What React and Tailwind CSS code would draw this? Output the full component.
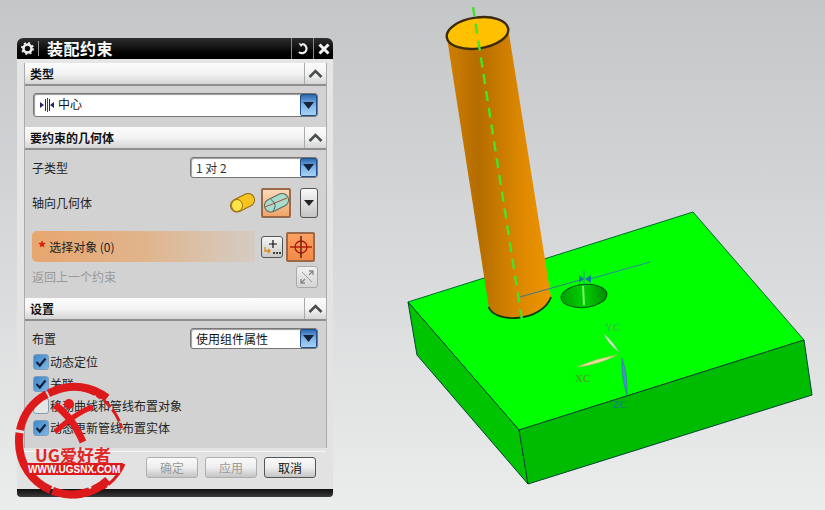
const font = { fontFamily: '"Noto Sans CJK SC","Liberation Sans",sans-serif' };

function Chevron() {
  return (
    <svg width="15" height="9" viewBox="0 0 15 9"><path d="M1.5 8 L7.5 2 L13.5 8" fill="none" stroke="#4a4d50" strokeWidth="2.6" /></svg>
  );
}

function Header({ title }) {
  return (
    <div className="flex h-[23px] border-b-2 border-[#8f8f8f] bg-gradient-to-b from-[#fbfbfb] via-[#f4f4f4] to-[#d4d5d6]">
      <div className="flex-1 pl-[5px] text-[12px] leading-[21px] font-bold text-[#111]">{title}</div>
      <div className="flex w-[22px] items-center justify-center border-l border-[#aaa]"><Chevron /></div>
    </div>
  );
}

function DropBtn() {
  return (
    <div className="flex w-[17px] items-center justify-center self-stretch rounded-[2px] border border-[#1f4e86] bg-gradient-to-b from-[#2f6bb2] via-[#7fb2e5] to-[#a9d2f2]">
      <svg width="11" height="7" viewBox="0 0 11 7"><path d="M0 0H11L5.5 7Z" fill="#14233a" /></svg>
    </div>
  );
}

function Combo({ className, children }) {
  return (
    <div className={"flex items-center rounded-[3px] border border-[#777] bg-white text-[12px] leading-[18px] text-[#111] shadow-[inset_1px_1px_1px_#999] " + className}>
      <div className="flex min-w-0 flex-1 items-center pl-[5px]">{children}</div>
      <DropBtn />
    </div>
  );
}

function Check({ label, checked = true }) {
  return (
    <div className="flex h-[22px] items-center gap-[1px] pl-[8px] text-[12px] text-[#222]">
      <div className={"flex h-[16px] w-[16px] items-center justify-center rounded-[3px] border border-[#7f9db9] " + (checked ? "bg-gradient-to-br from-[#3b86c8] to-[#7fb7e4]" : "bg-[#e6e6e6]")}>
        {checked && (
          <svg width="12" height="12" viewBox="0 0 12 12"><path d="M1.5 6 L4.8 9.5 L10.5 2.5" fill="none" stroke="#10223e" strokeWidth="2.2" /></svg>
        )}
      </div>
      <span>{label}</span>
    </div>
  );
}

function FootBtn({ children, disabled }) {
  return (
    <div className={"flex h-[21px] w-[52px] items-center justify-center rounded-[3px] border bg-gradient-to-b from-[#fafafa] via-[#eeeeee] to-[#c4c4c4] text-[12px] " + (disabled ? "border-[#aeaeae] text-[#9a9a9a]" : "border-[#555] text-[#111]")}>
      {children}
    </div>
  );
}

function Scene() {
  return (
    <svg className="absolute inset-0" width="825" height="510" viewBox="0 0 825 510">
      <defs>
        <linearGradient id="cyl" x1="0" y1="0" x2="1" y2="0">
          <stop offset="0" stopColor="#cf7f00" />
          <stop offset="0.3" stopColor="#b56d00" />
          <stop offset="0.75" stopColor="#e08a00" />
          <stop offset="1" stopColor="#ee9500" />
        </linearGradient>
        <linearGradient id="holeG" x1="0" y1="0" x2="1" y2="0">
          <stop offset="0" stopColor="#00a000" />
          <stop offset="0.5" stopColor="#00d000" />
          <stop offset="1" stopColor="#008a00" />
        </linearGradient>
      </defs>
      <polygon points="408,302 693,212 804,340 519,430" fill="#00ff00" stroke="#063" strokeWidth="1" />
      <polygon points="408,302 519,430 528,484 417,355" fill="#00c400" stroke="#043" strokeWidth="1" />
      <polygon points="519,430 804,340 812,395 528,484" fill="#00bc00" stroke="#043" strokeWidth="1" />
      <ellipse cx="584" cy="296" rx="23" ry="11.5" transform="rotate(-5 584 296)" fill="url(#holeG)" stroke="#065006" strokeWidth="1" />
      <path d="M447 38 L489 308 C495 324 542 322 551 297 L509 34 Z" fill="url(#cyl)" />
      <path d="M488.5 307 C495 324 542 322 551 297" fill="none" stroke="#0c3a14" strokeWidth="1.8" />
      <ellipse cx="477.5" cy="33" rx="31" ry="15.5" transform="rotate(-8 477.5 33)" fill="#ffc000" stroke="#3b2a10" strokeWidth="2.4" />
      <line x1="473" y1="7" x2="522" y2="320" stroke="#45e32c" strokeWidth="2.4" strokeDasharray="10 7" />
      <line x1="583" y1="286" x2="584" y2="305" stroke="#7cf06a" strokeWidth="2" />
      <line x1="520" y1="297" x2="580" y2="280" stroke="#3a7a8a" strokeWidth="1" />
      <line x1="590" y1="279" x2="650" y2="262" stroke="#2a8a9a" strokeWidth="1" />
      <line x1="584" y1="271" x2="584" y2="286" stroke="#2a8a9a" strokeWidth="1" />
      <polygon points="579,275 584,279 579,283" fill="#0f7a9a" />
      <polygon points="591,275 585,279 591,283" fill="#0f7a9a" />
      <path d="M604 334 Q612 340 619 352 Q608 344 604 334Z" fill="#c8e8c0" stroke="#7cb88a" strokeWidth="0.5" />
      <path d="M577 367 Q598 358 617 355 Q598 365 577 367Z" fill="#efdca0" stroke="#b8b070" strokeWidth="0.5" />
      <path d="M622 358 Q628 375 627 395 Q621 378 622 358Z" fill="#4a8fd0" stroke="#2a6a9a" strokeWidth="0.5" />
      <text x="605" y="331" fontSize="11" fill="#3fb44a" fontFamily="Liberation Serif, serif">YC</text>
      <text x="575" y="382" fontSize="11" fill="#4f9a2a" fontFamily="Liberation Serif, serif">XC</text>
      <text x="613" y="408" fontSize="11" fill="#1a7a8a" fontFamily="Liberation Serif, serif">ZC</text>
    </svg>
  );
}

function Stamp() {
  return (
    <div className="pointer-events-none absolute left-[10px] top-[380px] h-[124px] w-[122px]">
      <svg className="absolute inset-0" width="122" height="124" viewBox="0 0 122 124">
        <path d="M97 18 A52 52 0 0 0 44 11 A52 52 0 0 0 9 62 A52 52 0 0 0 46 112 A52 52 0 0 0 98 100" fill="none" stroke="#dc1a1c" strokeWidth="8" strokeDasharray="62 2 46 3 70 2 38 3" />
        <path d="M60 8 A54 54 0 0 1 112 50 M114 84 A54 54 0 0 1 90 110" fill="none" stroke="#dc1a1c" strokeWidth="3" strokeDasharray="9 3 14 2 5 4" />
        <path d="M44 111 Q68 122 92 106" fill="none" stroke="#dc1a1c" strokeWidth="6" strokeDasharray="18 2 9 2" />
        <circle cx="59" cy="24" r="5" fill="#e21a1c" />
        <path d="M45 25 C58 34 67 48 73 62" fill="none" stroke="#e21a1c" strokeWidth="7" />
        <path d="M83 27 C70 31 57 41 45 52" fill="none" stroke="#e21a1c" strokeWidth="5" />
        <path d="M16 83 H113 L110 95 L18 95Z" fill="#dc1a1c" />
      </svg>
      <div className="absolute left-[25px] top-[66px] flex h-[16px] items-center text-[17px] leading-none font-bold text-[#e0282a]" style={font}>UG爱好者</div>
      <div className="absolute left-[18px] top-[84px] text-[10px] leading-[11px] font-bold text-white" style={{ fontFamily: '"Liberation Sans",sans-serif' }}>WWW.UGSNX.COM</div>
    </div>
  );
}

export default function App() {
  return (
    <div className="relative h-[510px] w-[825px] overflow-hidden bg-gradient-to-b from-[#c5c6c8] to-[#ebecec]" style={font}>
      <Scene />
      <div className="absolute left-[17px] top-[38px] flex h-[459px] w-[316px] flex-col rounded-t-[6px] rounded-b-[4px] bg-gradient-to-b from-[#e6e6e6] to-[#e2e2e2]">
        <div className="flex h-[21px] items-center rounded-t-[6px] bg-gradient-to-b from-[#2e2e2e] via-[#101010] to-[#000]">
          <div className="flex w-[22px] items-center justify-center border-r border-[#999]">
            <svg width="15" height="15" viewBox="0 0 15 15">
              <circle cx="7.5" cy="7.5" r="4" fill="none" stroke="#eee" strokeWidth="2.6" />
              <circle cx="7.5" cy="7.5" r="5.6" fill="none" stroke="#eee" strokeWidth="1.8" strokeDasharray="2 2.4" />
            </svg>
          </div>
          <div className="flex-1 pl-[8px] text-[16px] leading-[21px] font-bold tracking-[0.5px] text-white">装配约束</div>
          <div className="flex h-full w-[22px] items-center justify-center border-l border-[#888]">
            <svg width="13" height="13" viewBox="0 0 13 13"><path d="M6 2.2 A4.5 4.5 0 1 1 3 10" fill="none" stroke="#eee" strokeWidth="2.2" /><path d="M2.5 1 L7 2.2 L5 5Z" fill="#eee" /></svg>
          </div>
          <div className="flex h-full w-[20px] items-center justify-center border-l border-[#888]">
            <svg width="12" height="12" viewBox="0 0 12 12"><path d="M1.5 1.5 L10.5 10.5 M10.5 1.5 L1.5 10.5" stroke="#f2f2f2" strokeWidth="3" /></svg>
          </div>
        </div>

        <div className="mx-[7px] mt-[4px] flex h-[385px] w-[303px] flex-col border-x border-[#aaa] bg-[#d2d2d2] shrink-0">
          <Header title="类型" />
          <div className="flex h-[41px] items-start px-[8px] pt-[7px]">
            <Combo className="h-[24px] w-[285px]">
              <svg width="17" height="14" viewBox="0 0 17 14" className="mr-[2px]">
                <path d="M1 4 L5 7 L1 10Z M15 4 L11 7 L15 10Z" fill="#25256a" />
                <path d="M6.5 1V13" stroke="#25256a" strokeWidth="1" />
                <path d="M8.5 0V14" stroke="#a01818" strokeWidth="1" />
                <path d="M10.5 1V13" stroke="#25256a" strokeWidth="1" />
              </svg>
              <span className="-mt-[2px]">中心</span>
            </Combo>
          </div>
          <Header title="要约束的几何体" />
          <div className="flex h-[148px] flex-col pl-[7px] pr-[8px]">
            <div className="mt-[7px] flex h-[21px] items-center justify-between text-[12px] text-[#222]">
              <span>子类型</span>
              <Combo className="h-[21px] w-[128px]"><span className="text-[#333]">1 对 2</span></Combo>
            </div>
            <div className="mt-[9px] flex h-[31px] items-center text-[12px] text-[#222]">
              <span className="flex-1">轴向几何体</span>
              <svg width="26" height="20" viewBox="0 0 26 20" className="mr-[6px]">
                <line x1="8" y1="12.5" x2="19" y2="7" stroke="#9a6a10" strokeWidth="14" strokeLinecap="round" />
                <line x1="8" y1="12.5" x2="19" y2="7" stroke="#f6c41e" strokeWidth="12" strokeLinecap="round" />
                <ellipse cx="8" cy="12.5" rx="5.5" ry="6" fill="#ffe44a" stroke="#a06a10" strokeWidth="1" />
              </svg>
              <div className="flex h-[30px] w-[30px] items-center justify-center rounded-[2px] border-2 border-[#9a6a48] bg-gradient-to-b from-[#fbd8b8] to-[#f0a468]">
                <svg width="26" height="20" viewBox="0 0 26 20">
                  <line x1="8" y1="12.5" x2="19" y2="7" stroke="#5a6a60" strokeWidth="14" strokeLinecap="round" />
                  <line x1="8" y1="12.5" x2="19" y2="7" stroke="#a8dccc" strokeWidth="12" strokeLinecap="round" />
                  <path d="M2 14 L24 5" stroke="#b04a30" strokeWidth="1" />
                  <path d="M8 6.5 C13 10 13 14 10 18" fill="none" stroke="#556" strokeWidth="1" />
                </svg>
              </div>
              <div className="ml-[9px] flex h-[30px] w-[18px] items-center justify-center rounded-[3px] border border-[#555] bg-gradient-to-b from-[#f8f8f8] to-[#c4c4c4]">
                <svg width="10" height="6" viewBox="0 0 10 6"><path d="M0 0H10L5 6Z" fill="#222" /></svg>
              </div>
            </div>
            <div className="mt-[13px] flex h-[31px] items-center">
              <div className="flex h-[31px] w-[223px] items-center rounded-l-[5px] bg-gradient-to-r from-[#e8a66e] via-[#e0b48c] to-[#d4ccc4] pl-[6px] text-[12px] text-[#222]">
                <span className="mr-[3px] text-[16px] leading-none font-bold text-[#d81e06]">*</span>
                <span>选择对象 (0)</span>
              </div>
              <div className="ml-[6px] flex h-[22px] w-[22px] items-center justify-center rounded-[3px] border border-[#555] bg-gradient-to-b from-[#f6f6f6] to-[#c8c8c8]">
                <svg width="18" height="18" viewBox="0 0 18 18">
                  <path d="M10 2V10M6 6H14" stroke="#111" strokeWidth="1.2" />
                  <path d="M2 9 V13 H7 M5 11 L7 13 L5 15" fill="none" stroke="#d98a20" strokeWidth="1.3" />
                  <path d="M10 15h2M13 15h2M16 15h2" stroke="#111" strokeWidth="1.4" />
                </svg>
              </div>
              <div className="ml-[3px] flex h-[30px] w-[29px] items-center justify-center rounded-[2px] border-2 border-[#9a6a48] bg-gradient-to-b from-[#fba060] to-[#f48a48]">
                <svg width="24" height="24" viewBox="0 0 24 24">
                  <circle cx="12" cy="12" r="6" fill="none" stroke="#a81808" strokeWidth="1.3" />
                  <path d="M12 1V23" stroke="#6a2a20" strokeWidth="1.6" />
                  <path d="M1 12H23" stroke="#a81808" strokeWidth="1.4" />
                </svg>
              </div>
            </div>
            <div className="mt-[4px] flex h-[22px] items-center justify-between text-[12px] text-[#999]">
              <span>返回上一个约束</span>
              <div className="flex h-[22px] w-[22px] items-center justify-center rounded-[3px] border border-[#aaa] bg-gradient-to-b from-[#f0f0f0] to-[#d4d4d4]">
                <svg width="16" height="16" viewBox="0 0 16 16"><path d="M2 14 L6 10 M10 6 L14 2 M10 2h4v4 M2 10v4h4" fill="none" stroke="#888" strokeWidth="1.3" /><path d="M3 3 L13 13" stroke="#999" strokeWidth="1" /></svg>
              </div>
            </div>
          </div>
          <Header title="设置" />
          <div className="flex flex-1 flex-col px-0">
            <div className="mt-[7px] mb-[2px] flex h-[21px] items-center justify-between pl-[7px] pr-[8px] text-[12px] text-[#222]">
              <span>布置</span>
              <Combo className="h-[21px] w-[128px]"><span>使用组件属性</span></Combo>
            </div>
            <Check label="动态定位" />
            <Check label="关联" />
            <Check label="移动曲线和管线布置对象" checked={false} />
            <Check label="动态更新管线布置实体" />
          </div>
        </div>

        <div className="mx-[7px] mt-[3px] border-t border-[#f4f4f4] flex flex-1 items-start justify-end gap-[7px] pr-[10px] pt-[5px]">
          <FootBtn disabled>确定</FootBtn>
          <FootBtn disabled>应用</FootBtn>
          <FootBtn>取消</FootBtn>
        </div>
        <div className="h-[8px] rounded-b-[4px] bg-gradient-to-b from-[#111] to-[#3a3a3a]" />
      </div>
      <Stamp />
    </div>
  );
}
